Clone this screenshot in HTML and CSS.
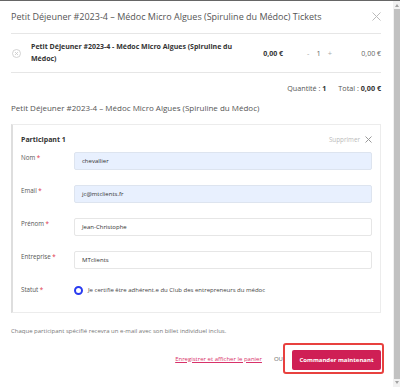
FILE: index.html
```html
<!DOCTYPE html>
<html lang="fr">
<head>
<meta charset="utf-8">
<link rel="stylesheet" href="styles.css">
</head>
<body>
<div class="page">
  <div class="modal">
    <div class="header">
      <div class="title">Petit Déjeuner #2023-4 – Médoc Micro Algues (Spiruline du Médoc) Tickets</div>
      <svg class="close" width="9" height="9" viewBox="0 0 9 9"><path d="M0.5 0.5L8.5 8.5M8.5 0.5L0.5 8.5" stroke="#bbb" stroke-width="1" fill="none"/></svg>
    </div>
    <div class="product">
      <svg class="remove" width="9" height="9" viewBox="0 0 9 9"><circle cx="4.5" cy="4.5" r="4" stroke="#c8c8c8" stroke-width="0.8" fill="none"/><path d="M3 3L6 6M6 3L3 6" stroke="#c8c8c8" stroke-width="0.8"/></svg>
      <div class="pname">Petit Déjeuner #2023-4 - Médoc Micro Algues (Spiruline du Médoc)</div>
      <div class="price">0,00 €</div>
      <div class="qty"><span class="minus">-</span><span class="num">1</span><span class="plus">+</span></div>
      <div class="subtotal">0,00 €</div>
    </div>
    <div class="summary">
      <span>Quantité : <b>1</b></span>
      <span>Total : <b>0,00 €</b></span>
    </div>
    <div class="heading">Petit Déjeuner #2023-4 – Médoc Micro Algues (Spiruline du Médoc)</div>
    <div class="box">
      <div class="box-head">
        <div class="ptitle">Participant 1</div>
        <div class="del">Supprimer <svg width="7" height="7" viewBox="0 0 7 7"><path d="M0.5 0.5L6.5 6.5M6.5 0.5L0.5 6.5" stroke="#999" stroke-width="1" fill="none"/></svg></div>
      </div>
      <div class="field"><div class="label">Nom <span class="req">*</span></div><div class="input filled">chevallier</div></div>
      <div class="field"><div class="label">Email <span class="req">*</span></div><div class="input filled">jc@mtclients.fr</div></div>
      <div class="field"><div class="label">Prénom <span class="req">*</span></div><div class="input">Jean-Christophe</div></div>
      <div class="field"><div class="label">Entreprise <span class="req">*</span></div><div class="input">MTclients</div></div>
      <div class="field status"><div class="label">Statut <span class="req">*</span></div><div class="radio-line"><span class="radio"></span><span>Je certifie être adhérent.e du Club des entrepreneurs du médoc</span></div></div>
    </div>
    <div class="note">Chaque participant spécifié recevra un e-mail avec son billet individuel inclus.</div>
    <div class="actions">
      <a class="link" href="#">Enregistrer et afficher le panier</a>
      <span class="ou">OU</span>
      <div class="focus"><button class="btn">Commander maintenant</button></div>
    </div>
  </div>
  <div class="scrollbar">
    <div class="arrow up"></div>
    <div class="thumb"></div>
    <div class="arrow down"></div>
  </div>
</div>
</body>
</html>
```
FILE: styles.css
```css
* { box-sizing: border-box; }
html, body { margin: 0; padding: 0; }
body {
  width: 400px; height: 387px; overflow: hidden;
  font-family: "Open Sans", "Noto Sans", sans-serif;
  color: #555; background: #fff;
}
.page { display: flex; height: 387px; border-top: 1px solid #666; }
.modal { flex: 1; padding: 0 12px 0 11px; display: block; }
.header { height: 33px; display: flex; align-items: center; justify-content: space-between; border-bottom: 1px solid #e6e6e6; padding-bottom: 1px; }
.title { font-size: 9px; color: #555; }
.close { margin-right: 0; }
.product { height: 39px; display: flex; align-items: center; border-bottom: 1px solid #e6e6e6; font-size: 7px; color: #333; }
.remove { margin-left: 1px; margin-right: 10px; flex: none; }
.pname { width: 222px; font-weight: 700; line-height: 12px; }
.price { width: 30px; text-align: right; font-weight: 700; }
.qty { width: 56px; display: flex; gap: 7px; color: #aaa; font-size: 7.5px; padding-left: 24px; }
.qty .num { color: #666; }
.subtotal { flex: 1; text-align: right; color: #666; }
.summary { height: 25px; padding-top: 5px; display: flex; justify-content: flex-end; align-items: center; gap: 12px; font-size: 7.2px; color: #555; }
.summary b { color: #333; }
.heading { font-size: 8px; color: #555; height: 18px; display: flex; align-items: center; padding-top: 1px; }
.box { margin-top: 8px; border: 1px solid #ececec; border-left: 2px solid #dedede; padding: 0 8px 0 8px; height: 189px; }
.box-head { height: 27px; display: flex; justify-content: space-between; align-items: center; padding-top: 2px; }
.ptitle { font-size: 7px; font-weight: 700; color: #333; }
.del { font-size: 6.3px; color: #bbb; display: flex; align-items: center; gap: 5px; }
.field { display: flex; height: 33px; }
.label { width: 53px; font-size: 6.2px; color: #555; padding-top: 1px; }
.req { color: #e0334a; }
.input { width: 298px; height: 18px; border: 1px solid #e6e6e6; border-radius: 2px; font-size: 6px; color: #333; padding-left: 7px; display: flex; align-items: center; }
.input.filled { background: #e8f0fe; border-color: #dde4ef; }
.status { margin-top: 1px; }
.status .label { padding-top: 0; line-height: 10px; }
.radio-line { display: flex; align-items: center; gap: 5px; font-size: 6px; color: #444; height: 10px; }
.radio { width: 9px; height: 9px; border-radius: 50%; border: 2.5px solid #2a3cf0; background: #fff; flex: none; }
.note { font-size: 6px; color: #777; margin-top: 14px; }
.actions { display: flex; align-items: center; justify-content: flex-end; margin-top: 8px; }
.link { font-size: 6px; color: #d8326a; text-decoration: underline; margin-right: 12px; }
.ou { font-size: 6px; color: #666; margin-right: 0; }
.focus { border: 2px solid #e8413f; border-radius: 3px; padding: 5px 1px 2px 7px; margin-right: -3px; display: flex; }
.btn { border: none; background: #cf1f55; color: #fff; font-family: inherit; font-weight: 700; font-size: 6px; height: 20px; width: 89px; border-radius: 2px; padding: 0; }
.scrollbar { width: 7px; background: #f1f1f1; display: flex; flex-direction: column; align-items: center; }
.thumb { flex: 1; width: 6px; background: #c1c1c1; margin: 2px 0; }
.arrow { width: 0; height: 0; border-left: 2.5px solid transparent; border-right: 2.5px solid transparent; }
.arrow.up { border-bottom: 3px solid #a3a3a3; margin-top: 3px; }
.arrow.down { border-top: 3px solid #a3a3a3; margin-bottom: 3px; }
```
